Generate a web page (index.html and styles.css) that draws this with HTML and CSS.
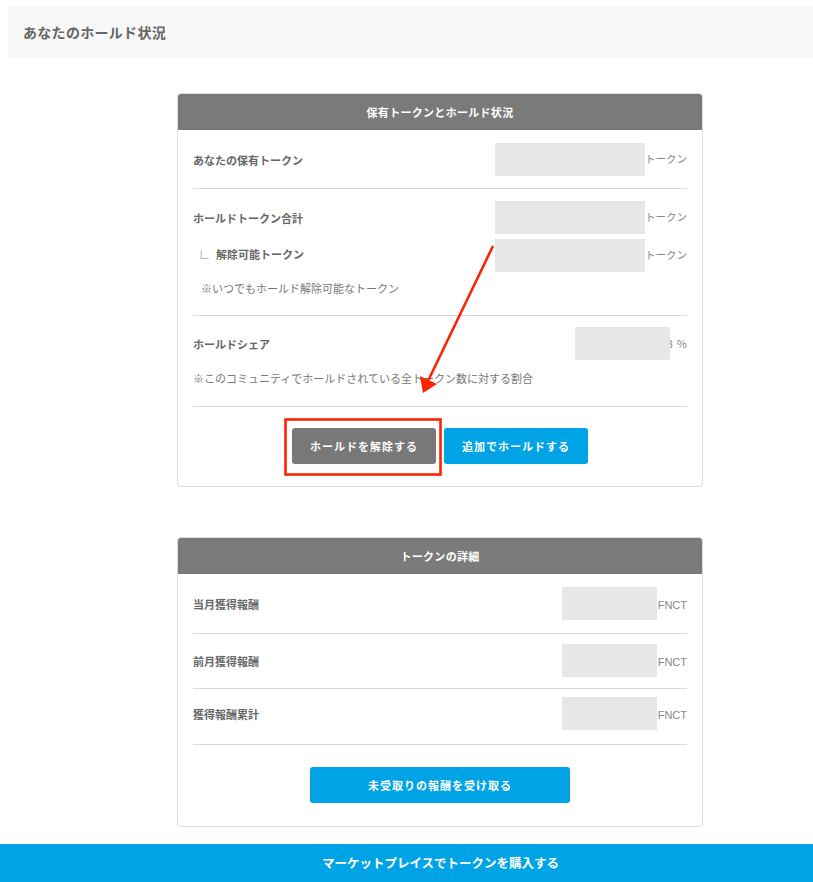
FILE: index.html
```html
<!DOCTYPE html>
<html lang="ja">
<head>
<meta charset="utf-8">
<title>あなたのホールド状況</title>
<link rel="stylesheet" href="styles.css">
</head>
<body>
<header class="page-head"><h1 class="page-title">あなたのホールド状況</h1></header>
<main class="content">
  <section class="card">
    <h2 class="card-head">保有トークンとホールド状況</h2>
    <div class="group g1">
      <div class="row">
        <span class="label">あなたの保有トークン</span>
        <span class="value"><span class="mask wide"></span><span class="unit">トークン</span></span>
      </div>
    </div>
    <div class="group g2">
      <div class="row">
        <span class="label">ホールドトークン合計</span>
        <span class="value"><span class="mask wide"></span><span class="unit">トークン</span></span>
      </div>
      <div class="row sub-row">
        <span class="label sub"><span class="corner">∟</span>解除可能トークン</span>
        <span class="value"><span class="mask wide"></span><span class="unit">トークン</span></span>
      </div>
      <p class="note indent">※いつでもホールド解除可能なトークン</p>
    </div>
    <div class="group g3">
      <div class="row">
        <span class="label">ホールドシェア</span>
        <span class="value"><span class="mask"></span><span class="digit">3</span><span class="unit pct">%</span></span>
      </div>
      <p class="note">※このコミュニティでホールドされている全トークン数に対する割合</p>
    </div>
    <div class="actions">
      <button class="btn btn-gray">ホールドを解除する</button>
      <button class="btn btn-blue">追加でホールドする</button>
    </div>
  </section>

  <section class="card card-2">
    <h2 class="card-head">トークンの詳細</h2>
    <div class="group r1">
      <div class="row">
        <span class="label">当月獲得報酬</span>
        <span class="value"><span class="mask"></span><span class="unit fnct">FNCT</span></span>
      </div>
    </div>
    <div class="group r2">
      <div class="row">
        <span class="label">前月獲得報酬</span>
        <span class="value"><span class="mask"></span><span class="unit fnct">FNCT</span></span>
      </div>
    </div>
    <div class="group r3">
      <div class="row">
        <span class="label">獲得報酬累計</span>
        <span class="value"><span class="mask"></span><span class="unit fnct">FNCT</span></span>
      </div>
    </div>
    <div class="actions">
      <button class="btn btn-blue btn-wide">未受取りの報酬を受け取る</button>
    </div>
  </section>
</main>
<footer class="buy-bar">マーケットプレイスでトークンを購入する</footer>
<svg class="annotation" width="813" height="882" viewBox="0 0 813 882" xmlns="http://www.w3.org/2000/svg">
  <rect x="285.5" y="419.5" width="155" height="55" fill="none" stroke="#ff2200" stroke-width="2.6"/>
  <line x1="493" y1="246" x2="428" y2="381" stroke="#ff2200" stroke-width="2.6"/>
  <polygon points="423,393 420,376 437,384" fill="#ff2200"/>
</svg>
</body>
</html>
```

FILE: styles.css
```css
* { box-sizing: border-box; }
html, body { margin: 0; padding: 0; }
body {
  background: #fff;
  font-family: "Noto Sans CJK JP", "Noto Sans", sans-serif;
  color: #666;
  position: relative;
  min-height: 882px;
}
.page-head {
  margin: 7px 0 0 8px;
  height: 50px;
  background: #f8f8f8;
  display: flex;
  align-items: center;
  padding-left: 15px;
}
.page-title {
  margin: 0;
  font-size: 14px;
  font-weight: 700;
  color: #666;
  letter-spacing: 0.3px;
}
.content {
  padding: 36px 0 60px 177px;
}
.card {
  width: 526px;
  border: 1px solid #dcdcdc;
  border-radius: 4px;
  overflow: hidden;
}
.card-2 { margin-top: 50px; }
.card-head {
  margin: 0;
  height: 36px;
  background: #7a7a7a;
  color: #fff;
  font-size: 11px;
  font-weight: 700;
  text-align: center;
  line-height: 36px;
  letter-spacing: 0.3px;
}
.group {
  margin: 0 15px;
  border-bottom: 1px solid #d8d8d8;
}
.g1 { padding: 13px 0 12px; }
.g2 { padding: 12px 0 19px; }
.g3 { padding: 11px 0 20px; }
.r1 { padding: 13px 0 13px; }
.r2 { padding: 10px 0 11px; }
.r3 { padding: 8px 0 14px; }
.row {
  display: flex;
  align-items: center;
  justify-content: space-between;
  height: 33px;
}
.sub-row { margin-top: 5px; }
.sub-row .label { margin-top: -3px; }
.label {
  font-size: 11px;
  font-weight: 700;
  color: #666;
}
.label.sub { padding-left: 6px; }
.corner {
  display: inline-block;
  font-weight: 400;
  color: #aaa;
  margin-right: 6px;
  font-size: 11px;
}
.value {
  display: flex;
  align-items: center;
  height: 33px;
}
.mask {
  display: block;
  width: 95px;
  height: 33px;
  background: #e7e7e7;
}
.mask.wide { width: 150px; }
.unit {
  font-size: 10.5px;
  color: #888;
  line-height: 1;
}
.unit.pct { margin-left: 4px; font-size: 11px; }
.unit.fnct { margin-left: 1px; padding-top: 3px; font-family: "Liberation Sans", "Noto Sans", sans-serif; font-size: 11px; }
.digit {
  display: inline-block;
  width: 3px;
  overflow: hidden;
  direction: rtl;
  font-size: 11px;
  color: #888;
  line-height: 1;
}
.note {
  margin: 8px 0 0;
  font-size: 11px;
  line-height: 16px;
  color: #777;
}
.note.indent { padding-left: 8px; }
.g3 .note { margin-top: 10px; }
.actions {
  display: flex;
  justify-content: center;
  gap: 8px;
  padding: 21px 0 22px;
}
.card-2 .actions { padding: 22px 0 23px; }
.btn {
  width: 144px;
  height: 36px;
  border: 0;
  border-radius: 3px;
  color: #fff;
  font-family: "Noto Sans CJK JP", "Noto Sans", sans-serif;
  font-size: 11px;
  font-weight: 700;
  letter-spacing: 1px;
  padding: 0;
}
.btn-gray { background: #787878; }
.btn-blue { background: #00a4e6; }
.btn-wide { width: 260px; }
.buy-bar {
  position: fixed;
  left: 0;
  right: 0;
  bottom: 0;
  height: 38px;
  padding-left: 68px;
  background: #00a4e6;
  color: #fff;
  font-size: 12.5px;
  font-weight: 700;
  text-align: center;
  line-height: 38px;
}
.annotation {
  position: absolute;
  top: 0;
  left: 0;
  pointer-events: none;
}
```
